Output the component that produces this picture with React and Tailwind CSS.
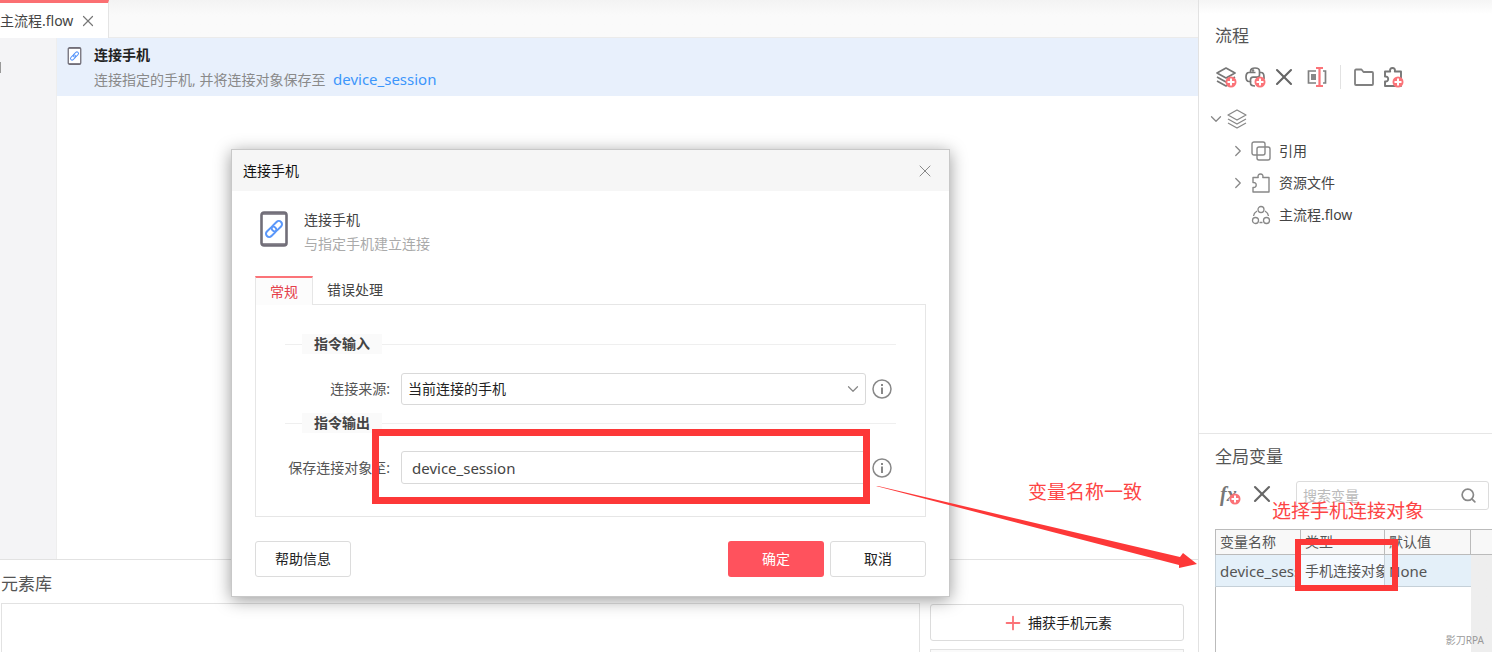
import React from 'react';
import { ChevronDown, ChevronRight, Plus, Search, X } from 'lucide-react';

const PlusBadge = () => (
  <svg viewBox="0 0 12 12" className="absolute -right-px -bottom-px h-3 w-3" aria-hidden="true">
    <circle cx="6" cy="6" r="5.500" fill="#fb7378" />
    <path d="M6 2.500v7M2.500 6h7" stroke="#fff" strokeWidth="2" />
  </svg>
);

const StackIcon = ({ strokeWidth = 1.3 }) => (
  <svg viewBox="0 0 20 20" className="h-5 w-5" fill="none" stroke="currentColor" strokeWidth={strokeWidth} strokeLinejoin="round">
    <path d="M10 1l9 5-9 5-9-5z" />
    <path d="M1 10l9 5 9-5M1 14l9 5 9-5" />
  </svg>
);

const PythonIcon = () => (
  <svg viewBox="0 0 20 20" className="h-5 w-5" fill="none" stroke="currentColor" strokeWidth="1.700" strokeLinejoin="round">
    <path d="M10.500 5.500H5.500V4c0-2 2-3 4.500-3s4.500 1 4.500 3v4c0 1.500-1 2.200-2.500 2.200H8c-1.700 0-2.500 1-2.500 2.500v1.800H4c-2 0-3-2-3-4.500s1-4.500 3-4.500h2" />
    <path d="M14.500 5.500H16c2 0 3 2 3 4.500v2M5.500 14.500V16c0 2 2 3 4.500 3" />
    <circle cx="8" cy="3.500" r="0.500" fill="currentColor" />
  </svg>
);

const PuzzleIcon = ({ strokeWidth = 1.4 }) => (
  <svg viewBox="0 0 20 20" className="h-5 w-5" fill="none" stroke="currentColor" strokeWidth={strokeWidth} strokeLinejoin="round">
    <path d="M2 4.500h5.200C6.500 2.300 7.800 1 9.500 1s3 1.300 2.300 3.500H18V19H2v-4.500c2 .3 3.200-.8 3.200-2.500S4 9.200 2 9.500z" />
  </svg>
);

const RenameIcon = () => (
  <svg viewBox="0 0 20 20" className="h-5 w-5" fill="none">
    <path d="M9 4H1.500v12H9M16 4h2.500v12H16" stroke="#808080" strokeWidth="1.700" />
    <rect x="4" y="7" width="5" height="6" fill="#888" />
    <path d="M9 1h7M9 19h7M12.500 1v18" stroke="#fb7378" strokeWidth="2.200" />
  </svg>
);

const FolderIcon = () => (
  <svg viewBox="0 0 20 20" className="h-5 w-5" fill="none" stroke="#808080" strokeWidth="1.800" strokeLinejoin="round">
    <path d="M1 3.500a1 1 0 011-1h5.500l2 2.500H18a1 1 0 011 1v11a1 1 0 01-1 1H2a1 1 0 01-1-1z" />
  </svg>
);

const CopyIcon = () => (
  <svg viewBox="0 0 20 20" className="h-5 w-5" fill="none" stroke="currentColor" strokeWidth="1.400">
    <rect x="1" y="1" width="13" height="13" rx="2" />
    <rect x="6" y="6" width="13" height="13" rx="2" />
  </svg>
);

const FlowIcon = () => (
  <svg viewBox="0 0 20 20" className="h-5 w-5" fill="none" stroke="currentColor" strokeWidth="1.300">
    <circle cx="10" cy="4.500" r="3" />
    <circle cx="4.500" cy="15.500" r="3" />
    <circle cx="15.500" cy="15.500" r="3" />
    <path d="M6 6C4 7.200 2.800 8.800 2.500 11M14 6c2 1.200 3.200 2.800 3.500 5M8.500 17.500h3" />
  </svg>
);

const PhoneLinkIcon = ({ className }) => (
  <svg viewBox="0 0 28 36" className={className} fill="none">
    <rect x="1.500" y="1.500" width="25" height="33" rx="2.500" fill="#fff" stroke="#716e78" strokeWidth="2.600" />
    <path d="M2 3h24M2 33h24" stroke="#716e78" strokeWidth="1.500" />
    <g transform="rotate(-45 14 18)" stroke="#5a97fa" strokeWidth="2">
      <rect x="4" y="14.800" width="12" height="6.400" rx="3.200" />
      <rect x="12" y="14.800" width="12" height="6.400" rx="3.200" />
    </g>
  </svg>
);

const InfoIcon = () => (
  <svg viewBox="0 0 20 20" className="h-5 w-5" fill="none" stroke="#888">
    <circle cx="10" cy="10" r="9" strokeWidth="1.500" />
    <path d="M10 8.500V15M10 5v2" strokeWidth="2" />
  </svg>
);

const GroupTitle = ({ children }) => (
  <div className="flex h-5 items-center">
    <span className="h-px w-[17px] bg-[#efefef]" />
    <h3 className="w-20 bg-[#fafafa] pl-3 text-sm leading-5 font-bold text-[#444]">{children}</h3>
    <span className="h-px flex-1 bg-[#efefef]" />
  </div>
);

const ConnectDialog = () => (
  <div
    role="dialog"
    aria-labelledby="dialog-title"
    className="absolute top-[149px] left-[231px] w-[719px] border border-[#c8c8c8] bg-white shadow-[0_3px_16px_rgba(0,0,0,0.4)]"
  >
    <div className="flex h-[41px] items-center justify-between bg-[#f6f6f6] pr-3.5 pl-[11px]">
      <h2 id="dialog-title" className="text-sm text-[#111]">连接手机</h2>
      <button type="button" aria-label="关闭" className="text-[#888]">
        <X size={20} strokeWidth={1.2} />
      </button>
    </div>

    <div className="px-[23px] pb-[19px]">
      <div className="flex h-[85px] items-start gap-4 pt-[17px] pl-[5px]">
        <PhoneLinkIcon className="mt-[3px] h-9 w-7" />
        <div>
          <p className="text-sm leading-6 text-[#444]">连接手机</p>
          <p className="text-sm leading-6 text-[#aaa]">与指定手机建立连接</p>
        </div>
      </div>

      <div role="tablist" className="flex h-7">
        <button
          type="button"
          role="tab"
          aria-selected="true"
          className="z-10 -mb-px w-[58px] border-x border-t-2 border-x-[#e6e6e6] border-t-[#fb7378] bg-[#fcfcfc] text-sm text-[#e5404a]"
        >
          常规
        </button>
        <button type="button" role="tab" aria-selected="false" className="px-3.5 text-sm text-[#444]">
          错误处理
        </button>
      </div>

      <div className="border border-[#e6e6e6] px-[29px] pt-[29px] pb-8">
        <GroupTitle>指令输入</GroupTitle>
        <div className="mt-[19px] flex items-center">
          <label htmlFor="source" className="w-[105px] text-right text-sm text-[#555]">连接来源:</label>
          <div className="relative ml-[11px] flex-1">
            <select
              id="source"
              className="block h-8 w-full appearance-none rounded-[3px] border border-[#d9d9d9] bg-white px-1.5 text-sm text-[#222] outline-none"
            >
              <option>当前连接的手机</option>
            </select>
            <ChevronDown size={18} strokeWidth={1.6} className="pointer-events-none absolute top-[7px] right-1 text-[#888]" />
          </div>
          <button type="button" aria-label="连接来源说明" className="mr-1 ml-1.5"><InfoIcon /></button>
        </div>

        <div className="mt-2">
          <GroupTitle>指令输出</GroupTitle>
        </div>
        <div className="relative mt-[18px] flex items-center">
          <label htmlFor="target" className="w-[105px] text-right text-sm whitespace-nowrap text-[#555]">保存连接对象至:</label>
          <input
            id="target"
            type="text"
            defaultValue="device_session"
            className="ml-[11px] h-[33px] min-w-0 flex-1 rounded-[3px] border border-[#d9d9d9] px-2.5 text-[15px] text-[#444] outline-none"
          />
          <button type="button" aria-label="保存连接对象说明" className="mr-1 ml-1.5"><InfoIcon /></button>
          <span className="pointer-events-none absolute -top-[22px] right-[26px] -bottom-5 left-[87px] border-[7px] border-[#fd3838]" />
        </div>
      </div>

      <div className="mt-6 flex gap-1.5">
        <button type="button" className="mr-auto h-9 w-24 rounded-[3px] border border-[#dcdcdc] bg-white text-sm text-[#222]">帮助信息</button>
        <button type="button" className="h-9 w-24 rounded-[3px] bg-[#ff525d] text-sm text-white">确定</button>
        <button type="button" className="h-9 w-24 rounded-[3px] border border-[#dcdcdc] bg-white text-sm text-[#222]">取消</button>
      </div>
    </div>
  </div>
);

const Editor = () => (
  <section className="flex min-h-0 flex-1 flex-col">
    <div className="flex h-[38px] border-b border-[#ebebeb] bg-linear-to-b from-[#f3f3f3] to-[#fafafa] to-40%">
      <div className="-mb-px flex w-[109px] items-center gap-1.5 border-t-3 border-r border-t-[#fb6f72] border-r-[#e4e4e4] bg-white">
        <span className="text-sm whitespace-nowrap text-[#444]">主流程.flow</span>
        <button type="button" aria-label="关闭标签" className="text-[#777]">
          <X size={18} strokeWidth={1.6} />
        </button>
      </div>
    </div>
    <div className="flex flex-1">
      <div className="w-[57px] border-r border-[#eee] bg-[#f4f4f6] pt-6">
        <div className="h-[11px] w-px bg-[#999]" />
      </div>
      <div className="flex-1">
        <div className="flex h-[58px] gap-3 bg-[#e8f0fc] pt-[5px] pl-2.5">
          <PhoneLinkIcon className="mt-1 h-[18px] w-[15px]" />
          <div>
            <p className="text-sm leading-6 font-bold text-[#222]">连接手机</p>
            <p className="text-sm leading-6 text-[#8a8a8a]">
              连接指定的手机, 并将连接对象保存至 <a href="#device_session" className="ml-1 text-[15px] text-[#3c96fb]">device_session</a>
            </p>
          </div>
        </div>
      </div>
    </div>
  </section>
);

const ElementLibrary = () => (
  <section className="flex h-[93px] flex-col border-t border-[#e2e2e2]">
    <h2 className="pt-3.5 pb-2.5 pl-px text-[17px] leading-[19px] text-[#555]">元素库</h2>
    <div className="flex flex-1 gap-2.5 pr-3.5 pl-px">
      <div className="flex-1 border-x border-t border-[#e2e2e2]" />
      <div className="flex w-[254px] flex-col gap-2">
        <button type="button" className="mt-px flex h-[37px] shrink-0 items-center justify-center gap-1 rounded-[3px] border border-[#dcdcdc] text-sm text-[#222]">
          <Plus size={22} strokeWidth={2} className="text-[#fb7378]" />
          捕获手机元素
        </button>
        <div className="flex-1 border-x border-t border-[#e2e2e2] bg-[#fafafa]" />
      </div>
    </div>
  </section>
);

const FlowPanel = () => (
  <section className="flex-1 bg-linear-to-b from-[#f5f5f5] to-white to-[14px] pt-6">
    <h2 className="pl-4 text-[17px] leading-6 text-[#555]">流程</h2>
    <div className="mt-[17px] flex h-6 items-center gap-[9px] pl-[17px] text-[#777]">
      <button type="button" aria-label="新建流程" className="relative"><StackIcon strokeWidth={1.7} /><PlusBadge /></button>
      <button type="button" aria-label="新建 Python 模块" className="relative"><PythonIcon /><PlusBadge /></button>
      <button type="button" aria-label="删除"><X size={28} strokeWidth={1.8} className="-mx-1 text-[#666]" /></button>
      <button type="button" aria-label="重命名" className="ml-1"><RenameIcon /></button>
      <span className="mx-1 h-6 w-px bg-[#e2e2e2]" />
      <button type="button" aria-label="打开文件夹"><FolderIcon /></button>
      <button type="button" aria-label="添加扩展" className="relative"><PuzzleIcon strokeWidth={1.9} /><PlusBadge /></button>
    </div>
    <ul className="mt-3.5 pl-2 text-sm text-[#444]">
      <li className="flex h-8 items-center gap-0.5 text-[#888]">
        <ChevronDown size={18} strokeWidth={1.7} /><StackIcon />
      </li>
      <li className="flex h-8 items-center gap-1 pl-[22px]">
        <ChevronRight size={18} strokeWidth={1.7} className="text-[#888]" />
        <span className="mr-1 text-[#888]"><CopyIcon /></span>引用
      </li>
      <li className="flex h-8 items-center gap-1 pl-[22px]">
        <ChevronRight size={18} strokeWidth={1.7} className="text-[#888]" />
        <span className="mr-1 text-[#888]"><PuzzleIcon /></span>资源文件
      </li>
      <li className="flex h-8 items-center gap-1 pl-11">
        <span className="mr-1 text-[#888]"><FlowIcon /></span>主流程.flow
      </li>
    </ul>
  </section>
);

const VariablePanel = () => (
  <section className="flex h-[219px] flex-col border-t border-[#e6e6e6]">
    <h2 className="pt-[11px] pl-4 text-[17px] leading-6 text-[#555]">全局变量</h2>
    <div className="relative mt-3 flex h-[29px] items-center pr-[3px] pl-[21px]">
      <button type="button" aria-label="新建变量" className="relative mb-1 h-5 w-5 text-left font-['Liberation_Serif',serif] text-xl leading-4 font-bold text-[#777] italic">
        fx<PlusBadge />
      </button>
      <button type="button" aria-label="删除变量" className="mb-1 ml-2 text-[#666]"><X size={28} strokeWidth={1.8} /></button>
      <div className="relative ml-5 flex-1">
        <input
          type="text"
          aria-label="搜索变量"
          placeholder="搜索变量"
          className="block h-[29px] w-full rounded-[3px] border border-[#dcdcdc] px-1.5 text-sm outline-none placeholder:text-[#bbb]"
        />
        <Search size={17} strokeWidth={2.4} className="absolute top-1.5 right-3 text-[#888]" />
      </div>
      <p className="absolute top-[18px] left-[73px] text-[19px] leading-6 whitespace-nowrap text-[#fd4545]">选择手机连接对象</p>
    </div>
    <div className="relative mt-[19px] ml-4 flex-1 bg-linear-to-r from-white from-[256px] to-[#eee] to-[256px]">
      <div className="absolute inset-y-0 left-0 w-px bg-[#bbb]" />
      <table className="relative w-full table-fixed border-separate border-spacing-0 text-left text-sm text-[#555]">
        <thead>
          <tr className="h-[26px] bg-[#f8f8f8]">
            <th className="w-[86px] overflow-hidden border border-[#bbb] px-1 py-0 font-normal whitespace-nowrap">变量名称</th>
            <th className="w-[84px] border-y border-r border-[#bbb] px-1 py-0 font-normal">类型</th>
            <th className="w-[86px] border-y border-r border-[#bbb] px-1 py-0 font-normal">默认值</th>
            <th className="border-y border-[#bbb] p-0" />
          </tr>
        </thead>
        <tbody>
          <tr className="h-8">
            <td className="overflow-hidden border-b border-l border-[#c5d0d8] bg-[#e4f0f9] p-0 pl-1 text-[15px] leading-5 whitespace-nowrap">device_session</td>
            <td className="overflow-hidden border-r border-b border-[#c5d0d8] bg-[#f5faff] p-0 pl-1 whitespace-nowrap">手机连接对象</td>
            <td className="border-b border-[#c5d0d8] bg-[#e4f0f9] p-0 pl-1 text-[15px] leading-5">None</td>
            <td className="p-0" />
          </tr>
        </tbody>
      </table>
      <span className="pointer-events-none absolute top-2.5 left-20 h-[52px] w-[103px] border-[6px] border-[#fd3838]" />
      <span className="absolute right-2 bottom-1.5 text-[10px] leading-3 text-[#999]">影刀RPA</span>
    </div>
  </section>
);

const App = () => (
  <div className="relative flex h-screen overflow-hidden bg-white font-['Noto_Sans','Noto_Sans_CJK_SC',sans-serif]">
    <main className="flex min-w-0 flex-1 flex-col">
      <Editor />
      <ElementLibrary />
    </main>
    <aside className="flex w-[294px] flex-col border-l border-[#e2e2e2]">
      <FlowPanel />
      <VariablePanel />
    </aside>

    <ConnectDialog />

    <p className="absolute top-[480px] left-[1028px] text-[19px] leading-6 text-[#fd4545]">变量名称一致</p>
    <svg viewBox="0 0 322 84" className="pointer-events-none absolute top-[485px] left-[876px] h-[84px] w-[322px]">
      <path d="M0 1L2 1L304 72L307 68L321 79L303 83L303 80Z" fill="#fd3838" />
    </svg>
  </div>
);

export default App;
